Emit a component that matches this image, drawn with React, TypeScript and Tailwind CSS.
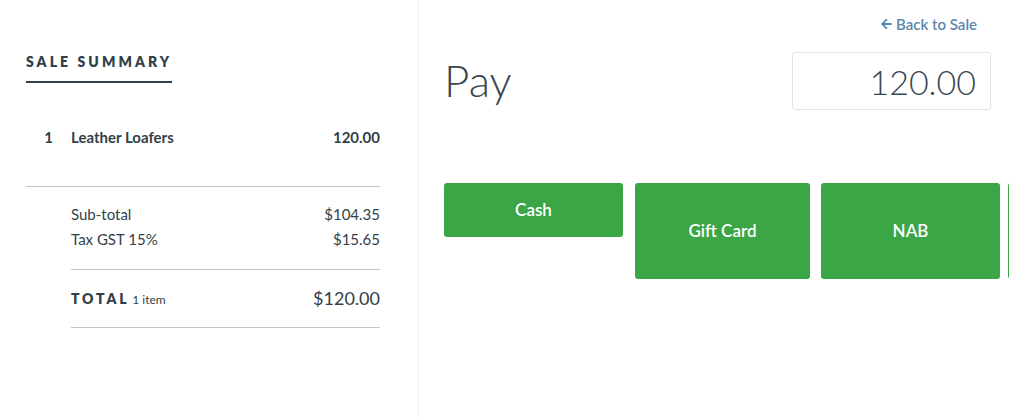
import React from 'react';

const lines = [
  { qty: 1, name: 'Leather Loafers', price: '120.00' },
];

const ArrowLeft = () => (
  <svg viewBox="0 0 448 512" className="h-[12px] w-[11px]" fill="currentColor">
    <path d="M257.5 445.1l-22.2 22.2c-9.4 9.4-24.6 9.4-33.9 0L7 273c-9.4-9.4-9.4-24.6 0-33.9L201.4 44.7c9.4-9.4 24.6-9.4 33.9 0l22.2 22.2c9.5 9.5 9.300 25-.4 34.3L136.6 216H424c13.3 0 24 10.7 24 24v32c0 13.3-10.7 24-24 24H136.6l120.5 114.8c9.8 9.3 10 24.8.4 34.3z" />
  </svg>
);

const App: React.FC = () => {
  return (
    <div className="flex h-[419px] w-full overflow-hidden bg-white text-[#333f49] font-['Lato','Liberation_Sans',sans-serif]">
      {/* sale summary */}
      <aside className="w-[419px] shrink-0 border-r border-[#eef1f3] pl-[26px] pr-[38px]">
        <div className="pt-[49px]">
          <h2 className="inline-block border-b-2 border-[#333f49] pb-[10px] text-[14px] font-extrabold leading-[18px] tracking-[0.22em]">
            SALE SUMMARY
          </h2>
        </div>
        <div className="pt-[44px] pb-[39px]">
          {lines.map((l) => (
            <div key={l.name} className="flex items-center text-[15px] font-bold leading-[20px]">
              <span className="w-[27px] text-right">{l.qty}</span>
              <span className="ml-[18px] flex-1">{l.name}</span>
              <span>{l.price}</span>
            </div>
          ))}
        </div>
        <div className="border-t border-[#bcc7cc]" />
        <div className="ml-[45px]">
          <div className="pt-[15px] pb-[17px] text-[15px] leading-[25px]">
            <div className="flex justify-between">
              <span>Sub-total</span>
              <span>$104.35</span>
            </div>
            <div className="flex justify-between">
              <span>Tax GST 15%</span>
              <span>$15.65</span>
            </div>
          </div>
          <div className="flex h-[59px] items-center justify-between border-y border-[#bcc7cc]">
            <span className="flex items-baseline gap-[3px]">
              <span className="text-[14px] font-extrabold tracking-[0.2em]">TOTAL</span>
              <span className="text-[12px]">1 item</span>
            </span>
            <span className="text-[18px]">$120.00</span>
          </div>
        </div>
      </aside>

      {/* payment */}
      <main className="flex-1 min-w-0 pl-[25px] pr-[18px]">
        <div className="flex justify-end pt-[15px] pr-[14px]">
          <a className="flex items-center gap-[4px] text-[15px] font-semibold leading-[18px] text-[#5a87ab] cursor-pointer">
            <ArrowLeft />
            Back to Sale
          </a>
        </div>
        <div className="mt-[19px] flex items-start justify-between">
          <h1 className="pt-[2px] text-[44px] font-light leading-[52px] text-[#3a4652]">Pay</h1>
          <div className="flex h-[58px] w-[199px] items-center justify-end rounded-[3px] border border-[#dfe4e8] pr-[14px] text-[34px] font-light text-[#3a4652]">
            120.00
          </div>
        </div>
        <div className="mt-[73px] flex w-[700px] items-start">
          <button className="h-[54px] w-[179px] shrink-0 rounded-[3px] bg-[#3ba645] pb-[1px] text-[17px] font-semibold text-white">
            Cash
          </button>
          <button className="ml-[12px] h-[96px] w-[175px] shrink-0 rounded-[3px] bg-[#3ba645] text-[17px] font-semibold text-white">
            Gift Card
          </button>
          <button className="ml-[11px] h-[96px] w-[179px] shrink-0 rounded-[3px] bg-[#3ba645] text-[17px] font-semibold text-white">
            NAB
          </button>
          <button className="ml-[8px] h-[96px] w-[179px] shrink-0 rounded-[3px] bg-[#3ba645]" aria-label="More" />
        </div>
      </main>
    </div>
  );
};

export default App;
